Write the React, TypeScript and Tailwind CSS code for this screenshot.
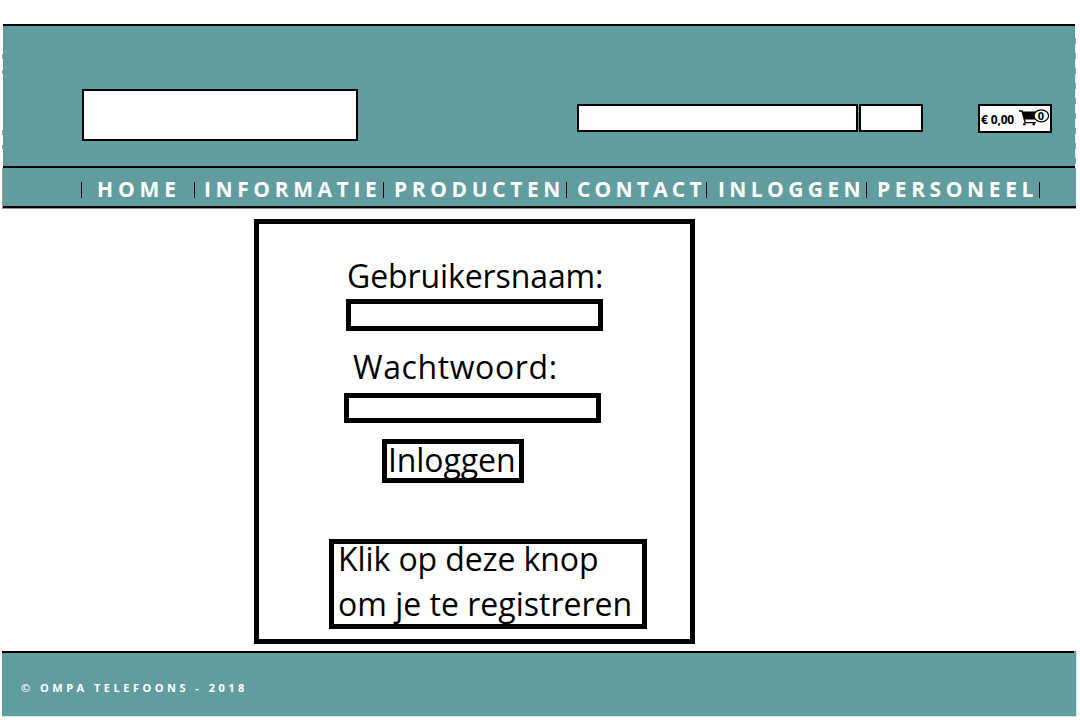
const navItems = [
  { label: "HOME", cell: "w-[113px] pl-[15px]", text: "tracking-[4.9px]" },
  { label: "INFORMATIE", cell: "w-[189px] pl-[9px]", text: "tracking-[4.6px]" },
  { label: "PRODUCTEN", cell: "w-[183px] pl-[10px]", text: "tracking-[4.6px]" },
  { label: "CONTACT", cell: "w-[140px] pl-[10px]", text: "tracking-[4.2px]" },
  { label: "INLOGGEN", cell: "w-[160px] pl-[11px]", text: "tracking-[4.4px]" },
  { label: "PERSONEEL", cell: "w-[174px] pl-[10px] border-r", text: "tracking-[4.6px]" },
];

function CartIcon() {
  return (
    <svg className="h-[18px] w-[32px] shrink-0 overflow-visible" viewBox="0 0 32 18">
      <path d="M0 2h3l3.2 11.6h10.6" fill="none" stroke="#000" strokeWidth="1.4" />
      <path d="M3 2.6h14v8L5.4 10.6z" fill="#000" />
      <circle cx="5.4" cy="15.2" r="1.3" />
      <circle cx="14.8" cy="15.2" r="1.3" />
      <ellipse cx="22.3" cy="6.8" rx="7.3" ry="6" fill="#fff" stroke="#000" strokeWidth="1.3" />
      <text x="22" y="10.8" textAnchor="middle" fontSize="11" fontWeight="700" fontFamily="Open Sans, sans-serif">0</text>
    </svg>
  );
}

export default function App() {
  return (
    <div className="flex h-[720px] w-[1080px] flex-col overflow-hidden bg-white pt-[24px] font-['Open_Sans',sans-serif] text-black">
      <header className="flex h-[144px] shrink-0">
        <div className="flex w-[3px] shrink-0 flex-col items-end">
          <i className="mt-[30px] h-[5px] w-px bg-[#8aa3a3]" />
          <i className="mt-[11px] h-[4px] w-px bg-[#8aa3a3]" />
          <i className="mt-[56px] h-[5px] w-px bg-[#8aa3a3]" />
          <i className="mt-[10px] h-[4px] w-px bg-[#8aa3a3]" />
        </div>
        <div className="flex w-[1072px] shrink-0 items-start border-y-2 border-black bg-[#619d9e]">
          <div className="mt-[63px] ml-[79px] h-[52px] w-[276px] border-2 border-black bg-white" />
          <input aria-label="Zoeken" className="mt-[78px] ml-[219px] h-[28px] w-[281px] border-2 border-black bg-white" />
          <button aria-label="Zoek" className="mt-[78px] ml-px h-[28px] w-[64px] border-2 border-black bg-white" />
          <div className="mt-[78px] ml-[55px] flex h-[29px] w-[74px] border-2 border-black bg-white">
            <span className="ml-px w-[38px] shrink-0 text-[12px] leading-[27px] font-bold tracking-[-0.15px] whitespace-nowrap [font-stretch:90%]">€ 0,00</span>
            <span className="mt-[3px] flex">
              <CartIcon />
            </span>
          </div>
        </div>
        <div className="mt-[14px] h-[128px] w-px bg-[repeating-linear-gradient(to_bottom,#8aa3a3_0_6px,#e4f0f0_6px_15px)]" />
      </header>

      <nav className="ml-[2px] flex h-[41px] w-[1074px] shrink-0 items-start border-b border-l border-[#999] bg-[#619d9e]">
        <div className="flex h-[40px] w-full items-start border-b-2 border-black pt-[14px] pl-[78px]">
          {navItems.map((item) => (
            <a key={item.label} className={`flex h-[16px] shrink-0 items-start border-l border-black whitespace-nowrap ${item.cell}`}>
              <span className={`-mt-px text-[21px] leading-[16px] font-bold text-white [font-stretch:89%] ${item.text}`}>{item.label}</span>
            </a>
          ))}
        </div>
      </nav>

      <main className="h-[442px] shrink-0 pt-[10px] pl-[254px]">
        <form className="flex h-[425px] w-[441px] flex-col items-start border-[5px] border-black text-[32px] leading-[45px] font-[440] whitespace-nowrap [font-stretch:89%]">
          <label className="mt-[29px] ml-[88px] h-[45px] tracking-[-0.1px]">Gebruikersnaam:</label>
          <input aria-label="Gebruikersnaam" className="mt-px ml-[87px] h-[32px] w-[257px] border-[5px] border-black" />
          <label className="mt-[13px] ml-[94px] h-[45px] tracking-[0.6px]">Wachtwoord:</label>
          <input aria-label="Wachtwoord" className="mt-[4px] ml-[85px] h-[30px] w-[257px] border-[5px] border-black" />
          <button type="button" className="mt-[16px] ml-[123px] flex h-[44px] w-[142px] border-[5px] border-black">
            <span className="-mt-[7px] pl-px tracking-[-0.1px]">Inloggen</span>
          </button>
          <button type="button" className="mt-[56px] ml-[70px] flex h-[90px] w-[318px] border-[5px] border-black pl-[4px] text-left">
            <span className="-mt-[8px]">
              <span className="block tracking-[-0.1px]">Klik op deze knop</span>
              <span className="block">om je te registreren</span>
            </span>
          </button>
        </form>
      </main>

      <footer className="ml-[2px] h-[66px] w-[1075px] shrink-0 border-r border-b border-[#d3e7e7] bg-[#619d9e]">
        <div className="h-[2px] w-[1072px] bg-black" />
        <p className="mt-[25px] ml-[19px] text-[11px] leading-[20px] font-bold tracking-[3.5px] whitespace-nowrap text-white [font-stretch:90%]">© OMPA TELEFOONS - 2018</p>
      </footer>
    </div>
  );
}
